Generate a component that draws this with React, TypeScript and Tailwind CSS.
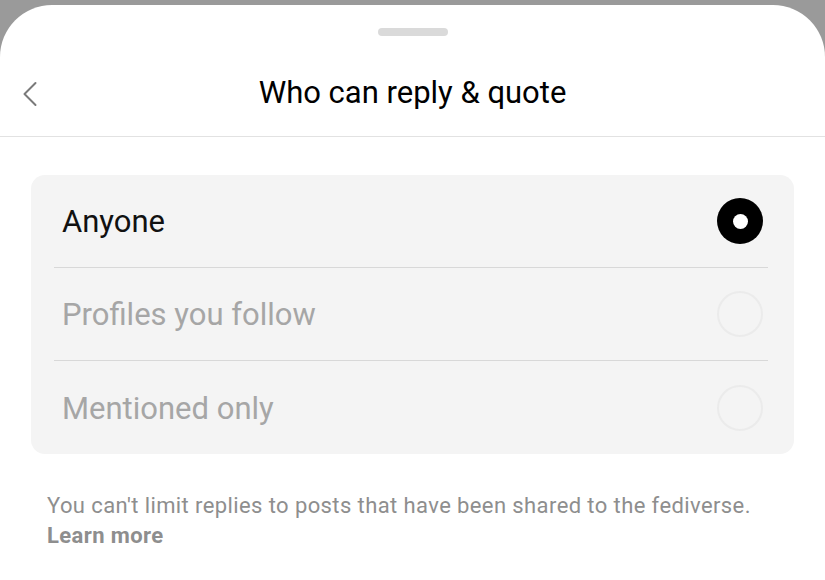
import { ChevronLeft } from "lucide-react";

const options = [
  { label: "Anyone", selected: true },
  { label: "Profiles you follow", selected: false },
  { label: "Mentioned only", selected: false },
];

function Radio({ selected }: { selected: boolean }) {
  if (selected) {
    return (
      <div className="w-[46px] h-[46px] rounded-full bg-black flex items-center justify-center">
        <div className="w-[15px] h-[15px] rounded-full bg-white" />
      </div>
    );
  }
  return <div className="w-[46px] h-[46px] rounded-full border-2 border-[#ebebeb]" />;
}

export default function App() {
  return (
    <div className="w-[825px] h-[580px] bg-[#9a9a9a] pt-[5px] overflow-hidden font-['Roboto',sans-serif]">
      <div className="h-full bg-white rounded-t-[52px] flex flex-col">
        <div className="flex justify-center pt-[23px]">
          <div className="w-[70px] h-[8px] rounded-full bg-[#dadada]" />
        </div>
        <div className="relative h-[101px] flex items-center justify-center border-b border-[#e2e2e2]">
          <button className="absolute left-[8px] top-[36px] text-[#7a7a7a]">
            <ChevronLeft size={44} strokeWidth={1.1} />
          </button>
          <h1 className="text-[31px] text-black pt-[15px]">Who can reply &amp; quote</h1>
        </div>

        <div className="mx-[31px] mt-[38px] bg-[#f4f4f4] rounded-[14px]">
          {options.map((o, i) => (
            <div key={o.label} className="pl-[23px] pr-[26px]">
              <div
                className={`h-[93px] flex items-center justify-between pl-[8px] pr-[5px] ${
                  i < options.length - 1 ? "border-b border-[#d8d8d8]" : ""
                }`}
              >
                <span className={`text-[31px] pt-[3px] ${o.selected ? "text-[#111111]" : "text-[#a6a6a6]"}`}>
                  {o.label}
                </span>
                <Radio selected={o.selected} />
              </div>
            </div>
          ))}
        </div>

        <div className="px-[47px] pt-[37px] text-[22px] leading-[30px] tracking-[0.4px] text-[#8e8e8e]">
          <p>You can't limit replies to posts that have been shared to the fediverse.</p>
          <p className="font-bold">Learn more</p>
        </div>
      </div>
    </div>
  );
}
